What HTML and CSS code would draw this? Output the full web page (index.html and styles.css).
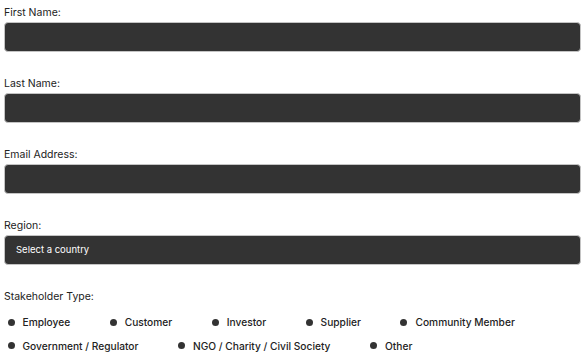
FILE: index.html
```html
<!DOCTYPE html>
<html lang="en">
<head>
<meta charset="utf-8">
<title>Stakeholder form</title>
<link rel="stylesheet" href="styles.css">
</head>
<body>
<form class="form">
  <div class="field">
    <label class="label">First Name:</label>
    <div class="input"></div>
  </div>
  <div class="field">
    <label class="label">Last Name:</label>
    <div class="input"></div>
  </div>
  <div class="field">
    <label class="label">Email Address:</label>
    <div class="input"></div>
  </div>
  <div class="field">
    <label class="label">Region:</label>
    <div class="input select">Select a country</div>
  </div>
  <div class="field stakeholder">
    <label class="label">Stakeholder Type:</label>
    <div class="radios">
      <span class="radio"><span class="dot"></span>Employee</span>
      <span class="radio"><span class="dot"></span>Customer</span>
      <span class="radio"><span class="dot"></span>Investor</span>
      <span class="radio"><span class="dot"></span>Supplier</span>
      <span class="radio"><span class="dot"></span>Community Member</span>
      <span class="radio"><span class="dot"></span>Government / Regulator</span>
      <span class="radio"><span class="dot"></span>NGO / Charity / Civil Society</span>
      <span class="radio"><span class="dot"></span>Other</span>
    </div>
  </div>
</form>
</body>
</html>
```

FILE: styles.css
```css
html, body {
  margin: 0;
  padding: 0;
  background: #ffffff;
}
body {
  font-family: Inter, "Noto Sans", sans-serif;
  color: #222222;
}
.form {
  padding: 6.5px 4px 0 4px;
}
.field {
  margin-bottom: 26px;
}
.label {
  display: block;
  font-size: 10.5px;
  line-height: 12px;
  margin-bottom: 3px;
  color: #222222;
}
.input {
  box-sizing: border-box;
  height: 30px;
  background: #333333;
  border: 1px solid #c4c4c4;
  border-radius: 4px;
}
.select {
  display: flex;
  align-items: center;
  padding-left: 11px;
  color: #ffffff;
  font-size: 9.5px;
}
.stakeholder {
  margin-top: 1.5px;
  margin-bottom: 0;
}
.stakeholder .label {
  margin-bottom: 12.5px;
}
.radios {
  display: flex;
  flex-wrap: wrap;
  column-gap: 36px;
  row-gap: 9.5px;
}
.radio {
  display: flex;
  align-items: center;
  gap: 8px;
  padding-left: 3.5px;
  height: 14px;
  font-size: 10.2px;
  font-weight: 500;
  color: #222222;
}
.dot {
  width: 7px;
  height: 7px;
  border-radius: 50%;
  background: #333333;
}
```
